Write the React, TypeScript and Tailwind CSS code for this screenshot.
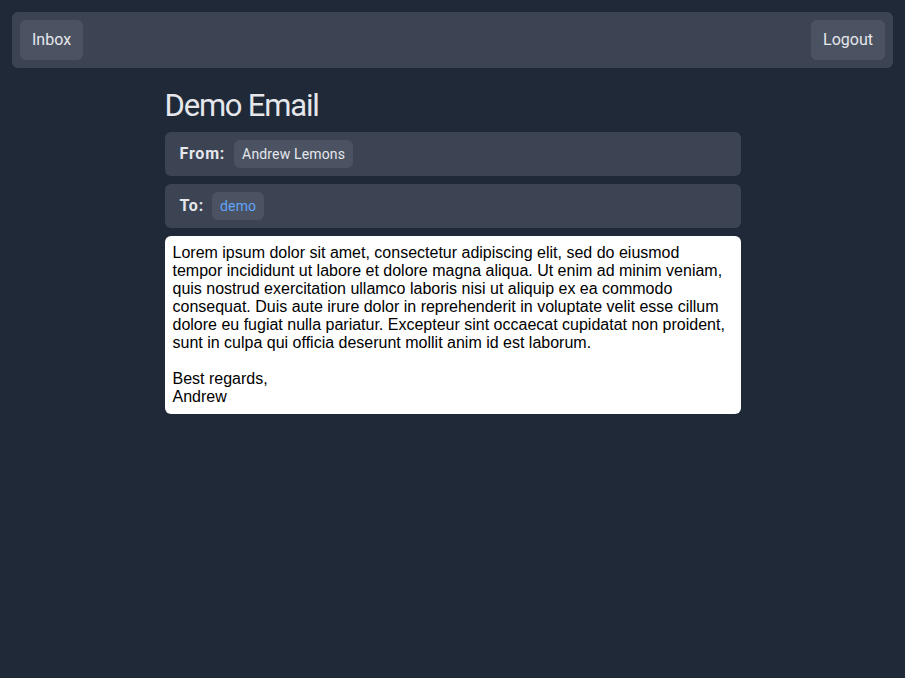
import React from "react";

const body = `Lorem ipsum dolor sit amet, consectetur adipiscing elit, sed do eiusmod tempor incididunt ut labore et dolore magna aliqua. Ut enim ad minim veniam, quis nostrud exercitation ullamco laboris nisi ut aliquip ex ea commodo consequat. Duis aute irure dolor in reprehenderit in voluptate velit esse cillum dolore eu fugiat nulla pariatur. Excepteur sint occaecat cupidatat non proident, sunt in culpa qui officia deserunt mollit anim id est laborum.

Best regards,
Andrew`;

export default function App() {
  return (
    <div className="min-h-[678px] bg-[#1f2937] p-3 text-[#e5e7eb]" style={{ fontFamily: "Roboto, Inter, sans-serif" }}>
      <nav className="flex items-center justify-between rounded-md bg-[#3c4454] p-2">
        <button className="h-10 rounded-md bg-[#4b5363] px-3 text-base text-[#e5e7eb]">Inbox</button>
        <button className="h-10 rounded-md bg-[#4b5363] px-3 text-base text-[#e5e7eb]">Logout</button>
      </nav>
      <div className="mx-auto mt-5 flex max-w-[576px] flex-col gap-2">
        <h1 className="text-[31px] leading-9 tracking-[-1.2px] text-[#e5e7eb]">Demo Email</h1>
        <div className="flex h-11 items-center gap-2 rounded-md bg-[#3c4454] pl-[15px] pr-[15px]">
          <span className="font-bold tracking-[0.8px]">From:</span>
          <span className="ml-px rounded-md bg-[#4b5363] px-2 py-[4px] text-sm tracking-[0.15px]">Andrew Lemons</span>
        </div>
        <div className="flex h-11 items-center gap-2 rounded-md bg-[#3c4454] px-[15px]">
          <span className="font-bold tracking-[0.8px]">To:</span>
          <span className="rounded-md bg-[#4b5363] px-2 py-[4px] text-sm tracking-[0.15px] text-[#60a5fa]">demo</span>
        </div>
        <div
          className="whitespace-pre-wrap rounded-md bg-white p-2 text-base leading-[18px] text-black"
          style={{ fontFamily: "'Liberation Sans', Arial, sans-serif" }}
        >
          {body}
        </div>
      </div>
    </div>
  );
}
